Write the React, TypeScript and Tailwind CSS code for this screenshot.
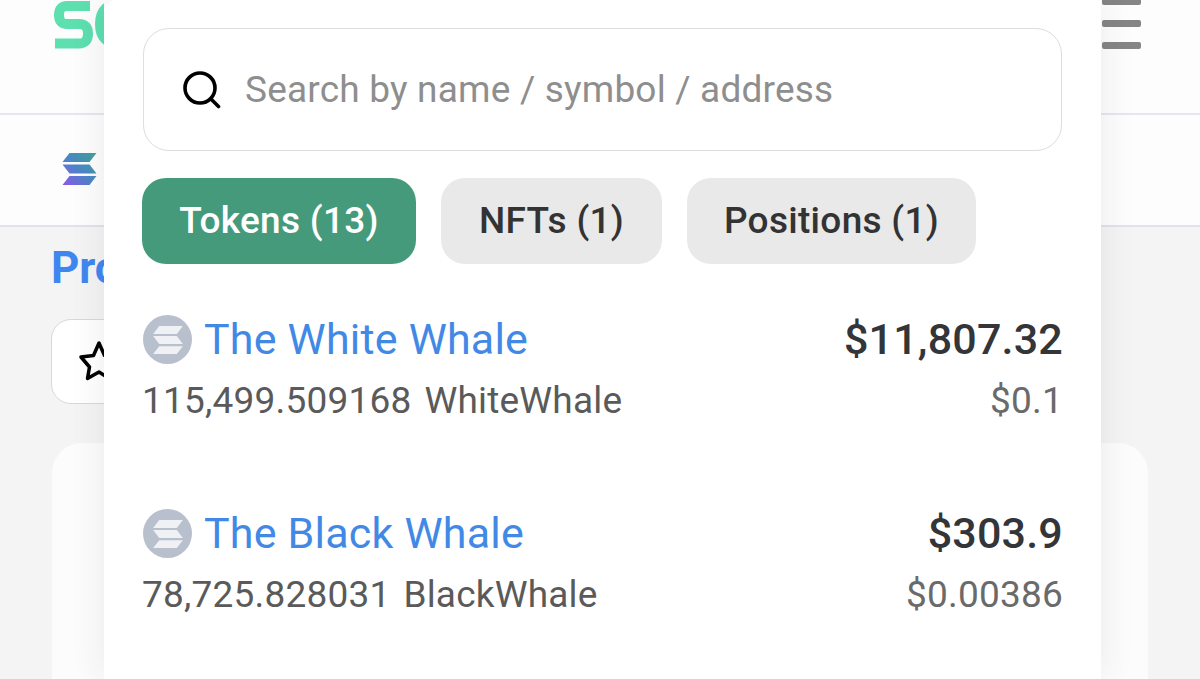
import React from "react";

function SolanaBars({ className, fill, id }: { className: string; fill?: string; id?: string }) {
  return (
    <svg viewBox="0 0 34 32" className={className}>
      {id && (
        <defs>
          <linearGradient id={id} x1="1" y1="0" x2="0" y2="1">
            <stop offset="0" stopColor="#3fa596" />
            <stop offset="0.5" stopColor="#4a86c6" />
            <stop offset="1" stopColor="#8c58e8" />
          </linearGradient>
        </defs>
      )}
      <path d="M7 0H34L27 9H0ZM0 11.500H27L34 20.500H7ZM7 23H34L27 32H0Z" fill={id ? `url(#${id})` : fill} />
    </svg>
  );
}

function TokenRow({
  name,
  balance,
  symbol,
  value,
  price,
}: {
  name: string;
  balance: string;
  symbol: string;
  value: string;
  price: string;
}) {
  return (
    <div className="-mr-px flex h-[194px] items-start justify-between">
      <div>
        <div className="flex h-[49px] items-center gap-[12px]">
          <div className="flex h-[49px] w-[49px] items-center justify-center rounded-full bg-[#b9c0cd]">
            <SolanaBars className="h-[28px] w-[32px]" fill="#eff1f4" />
          </div>
          <span className="text-[43px] leading-[49px] tracking-[0.2px] text-[#4289e6]">{name}</span>
        </div>
        <div className="mt-[15px] flex gap-[13px] text-[37px] leading-[44px] tracking-[0.2px] text-[#5a5a5a]">
          <span className="-ml-px">{balance}</span>
          <span>{symbol}</span>
        </div>
      </div>
      <div className="flex flex-col items-end">
        <div className="text-[43px] font-medium leading-[49px] tracking-[0.2px] text-[#333538]">{value}</div>
        <div className="mt-[15px] text-[37px] leading-[44px] tracking-[0.2px] text-[#6a6a6a]">{price}</div>
      </div>
    </div>
  );
}

export default function App() {
  return (
    <div className="relative h-[679px] w-[1200px] overflow-hidden bg-[#f4f4f5] [font-family:Roboto,sans-serif]">
      <header className="flex h-[115px] items-start justify-between border-b-2 border-[#e6e6ee] bg-[#fdfdfe] pl-[53px] pr-[59px]">
        <svg viewBox="53 0 51 50" className="h-[50px] w-[51px]">
          <path
            d="M90 6H67Q59 6 59 15Q59 24 67 24H79Q88 24 88 33.500Q88 43.500 79 43.500H55"
            fill="none"
            stroke="#5ddfb0"
            strokeWidth="10"
          />
          <path d="M120 4Q100 4 100 24Q100 44 120 44" fill="none" stroke="#5ddfb0" strokeWidth="10" />
        </svg>
        <div className="-mt-[2px] flex w-[39px] flex-col gap-[15px]">
          <div className="h-[7px] rounded-[2px] bg-[#858585]" />
          <div className="h-[7px] rounded-[2px] bg-[#858585]" />
          <div className="h-[7px] rounded-[2px] bg-[#858585]" />
        </div>
      </header>
      <nav className="flex h-[112px] items-center border-b-2 border-[#e2e2ea] bg-[#fdfdfe] pl-[62px]">
        <SolanaBars className="-mt-[2px] h-[32px] w-[35px]" id="sol" />
      </nav>
      <main className="pl-[51px]">
        <h1 className="mt-[14px] text-[44px] font-bold leading-[54px] text-[#3f87f0]">Profile</h1>
        <button className="mt-[24px] flex h-[85px] w-[120px] items-center rounded-[20px] border border-[#d8d8dc] bg-white pl-[26px]">
          <svg viewBox="78 340 44 44" className="h-[44px] w-[44px]">
            <path
              d="M99 343L93.500 355.500L81 357L89.500 367L87.500 378.500L99 372L110 379L108 367L118 357L104.500 355.500Z"
              fill="none"
              stroke="#000000"
              strokeWidth="3.500"
              strokeLinejoin="round"
            />
          </svg>
        </button>
        <section className="ml-px mt-[39px] h-[300px] w-[1096px] rounded-[30px] bg-[#fcfcfd]" />
      </main>
      <div className="absolute bottom-0 left-[104px] top-0 w-[997px] rounded-tl-[12px] bg-white px-[39px] pt-[28px] shadow-[0_0_36px_rgba(40,40,60,0.09)]">
        <div className="flex h-[123px] items-center gap-[24px] rounded-[26px] border border-[#dddde2] pl-[39px]">
          <svg viewBox="0 0 38 38" className="h-[38px] w-[38px]">
            <circle cx="17" cy="17" r="15" fill="none" stroke="#000000" strokeWidth="3.600" />
            <path d="M28 28L35.500 35.500" fill="none" stroke="#000000" strokeWidth="3.600" strokeLinecap="round" />
          </svg>
          <span className="text-[37px] tracking-[0.2px] text-[#8e8e8e]">Search by name / symbol / address</span>
        </div>
        <div className="-ml-px mt-[27px] flex gap-[25px]">
          <div className="flex h-[86px] w-[274px] items-center justify-center rounded-[24px] bg-[#459a7c] text-[37px] font-medium tracking-[0.3px] text-white">
            Tokens (13)
          </div>
          <div className="flex h-[86px] w-[221px] items-center justify-center rounded-[24px] bg-[#e9e9e9] text-[37px] font-medium tracking-[0.3px] text-[#333333]">
            NFTs (1)
          </div>
          <div className="flex h-[86px] w-[289px] items-center justify-center rounded-[24px] bg-[#e9e9e9] text-[37px] font-medium tracking-[0.3px] text-[#333333]">
            Positions (1)
          </div>
        </div>
        <div className="mt-[51px]">
          <TokenRow name="The White Whale" balance="115,499.509168" symbol="WhiteWhale" value="$11,807.32" price="$0.1" />
          <TokenRow name="The Black Whale" balance="78,725.828031" symbol="BlackWhale" value="$303.9" price="$0.00386" />
        </div>
      </div>
    </div>
  );
}
